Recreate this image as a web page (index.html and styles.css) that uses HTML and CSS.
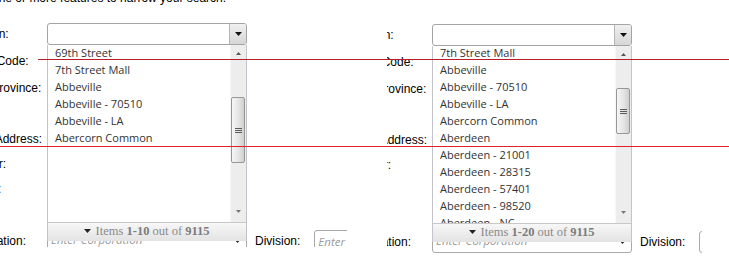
FILE: index.html
```html
<!DOCTYPE html>
<html lang="en">
  <head>
    <meta charset="UTF-8" />
    <meta name="viewport" content="width=device-width, initial-scale=1.0" />
    <title>search</title>
    <link rel="stylesheet" href="styles.css">
  </head>
  <body>
    <div class="page">
      <div class="shots">
        <!-- first capture: list scrolled, 10 items loaded -->
        <div class="shot shot-a">
          <div class="search">
            <p class="intro">Enter one or more features to narrow your search.</p>
            <div class="fields">
              <label>Location:</label>
              <div class="combo">
                <input class="combo-input" type="text" />
                <span class="combo-btn">
                  <svg width="7" height="4" viewBox="0 0 7 4"><polygon points="0,0 7,0 3.5,4" fill="#111" /></svg>
                </span>
                <div class="popup">
                  <div class="popup-body">
                    <ul class="popup-items" style="margin-top: -1px">
                      <li>69th Street</li>
                      <li>7th Street Mall</li>
                      <li>Abbeville</li>
                      <li>Abbeville - 70510</li>
                      <li>Abbeville - LA</li>
                      <li>Abercorn Common</li>
                    </ul>
                    <div class="scroll">
                      <span class="scroll-btn">
                        <svg width="5" height="3" viewBox="0 0 5 3"><polygon points="0,3 5,3 2.5,0" fill="#555" /></svg>
                      </span>
                      <div class="scroll-track">
                        <div class="thumb" style="margin-top: 35px; height: 66px"><i class="grip"></i></div>
                      </div>
                      <span class="scroll-btn scroll-btn-down">
                        <svg width="5" height="3" viewBox="0 0 5 3"><polygon points="0,0 5,0 2.5,3" fill="#777" /></svg>
                      </span>
                    </div>
                  </div>
                  <div class="popup-foot">
                    <svg width="7" height="4" viewBox="0 0 7 4"><polygon points="0,0 7,0 3.5,4" fill="#222" /></svg>
                    Items <b>1-10</b> out of <b>9115</b>
                  </div>
                </div>
              </div>
              <label>Postal Code:</label>
              <input class="input" type="text" />
              <label>State/Province:</label>
              <input class="input" type="text" />
              <label>City:</label>
              <input class="input" type="text" />
              <label>Street Address:</label>
              <input class="input" type="text" />
              <label>Number:</label>
              <input class="input" type="text" />
              <label>County:</label>
              <input class="input" type="text" />
              <label>Site:</label>
              <input class="input" type="text" />
              <label>Corporation:</label>
              <div class="split">
                <div class="combo combo-plain">
                  <input class="combo-input" type="text" placeholder="Enter Corporation" />
                  <svg class="caret" width="7" height="4" viewBox="0 0 7 4"><polygon points="0,0 7,0 3.5,4" fill="#222" /></svg>
                </div>
                <label class="split-label">Division:</label>
                <input class="input input-short" type="text" placeholder="Enter Division" />
              </div>
            </div>
          </div>
        </div>

        <!-- second capture: 20 items loaded -->
        <div class="shot shot-b">
          <div class="search search-b">
            <div class="fields">
              <label>Location:</label>
              <div class="combo">
                <input class="combo-input" type="text" />
                <span class="combo-btn">
                  <svg width="7" height="4" viewBox="0 0 7 4"><polygon points="0,0 7,0 3.5,4" fill="#111" /></svg>
                </span>
                <div class="popup">
                  <div class="popup-body">
                    <ul class="popup-items" style="margin-top: -2px">
                      <li>7th Street Mall</li>
                      <li>Abbeville</li>
                      <li>Abbeville - 70510</li>
                      <li>Abbeville - LA</li>
                      <li>Abercorn Common</li>
                      <li>Aberdeen</li>
                      <li>Aberdeen - 21001</li>
                      <li>Aberdeen - 28315</li>
                      <li>Aberdeen - 57401</li>
                      <li>Aberdeen - 98520</li>
                      <li>Aberdeen - NC</li>
                    </ul>
                    <div class="scroll">
                      <span class="scroll-btn">
                        <svg width="5" height="3" viewBox="0 0 5 3"><polygon points="0,3 5,3 2.5,0" fill="#555" /></svg>
                      </span>
                      <div class="scroll-track">
                        <div class="thumb" style="margin-top: 25px; height: 46px"><i class="grip"></i></div>
                      </div>
                      <span class="scroll-btn scroll-btn-down">
                        <svg width="5" height="3" viewBox="0 0 5 3"><polygon points="0,0 5,0 2.5,3" fill="#777" /></svg>
                      </span>
                    </div>
                  </div>
                  <div class="popup-foot">
                    <svg width="7" height="4" viewBox="0 0 7 4"><polygon points="0,0 7,0 3.5,4" fill="#222" /></svg>
                    Items <b>1-20</b> out of <b>9115</b>
                  </div>
                </div>
              </div>
              <label>Postal Code:</label>
              <input class="input" type="text" />
              <label>State/Province:</label>
              <input class="input" type="text" />
              <label>City:</label>
              <input class="input" type="text" />
              <label>Street Address:</label>
              <input class="input" type="text" />
              <label>Number:</label>
              <input class="input" type="text" />
              <label>County:</label>
              <input class="input" type="text" />
              <label>Site:</label>
              <input class="input" type="text" />
              <label>Corporation:</label>
              <div class="split">
                <div class="combo combo-plain">
                  <input class="combo-input" type="text" placeholder="Enter Corporation" />
                  <svg class="caret" width="7" height="4" viewBox="0 0 7 4"><polygon points="0,0 7,0 3.5,4" fill="#222" /></svg>
                </div>
                <label class="split-label">Division:</label>
                <input class="input input-short" type="text" placeholder="Enter Division" />
              </div>
            </div>
          </div>
        </div>
      </div>

      <div class="mark mark-top"></div>
      <div class="mark mark-mid"></div>
    </div>
  </body>
</html>
```

FILE: styles.css
```css
body {
  margin: 0;
  background: #fff;
  font-family: "Liberation Sans", Arial, sans-serif;
  font-size: 12px;
  color: #000;
}
.page {
  position: relative;
  width: 729px;
  height: 278px;
  overflow: hidden;
}
.shots {
  display: flex;
  gap: 40px;
}
.shot {
  flex: none;
  overflow: hidden;
}
.shot-a {
  width: 347px;
  height: 247px;
}
.shot-b {
  width: 315px;
  height: 255px;
}
.search {
  margin-left: -40px;
}
.search-b {
  margin-left: -42px;
  padding-top: 21px;
}
.intro {
  margin: -9px 0 0;
  line-height: 14px;
  white-space: nowrap;
}
.search .intro + .fields {
  margin-top: 15px;
}
.fields {
  display: grid;
  grid-template-columns: 87px auto;
  grid-template-rows: 27px 27px 27px 25px 25px 25px 26px 26px 26px;
  align-items: center;
  justify-items: start;
}
.fields label {
  white-space: nowrap;
  line-height: 14px;
}
.input {
  box-sizing: border-box;
  width: 200px;
  height: 22px;
  margin: 0;
  padding: 0 3px;
  border: 1px solid #a9a9a9;
  border-radius: 3px;
  font: italic 11.5px "Open Sans", sans-serif;
}
.input::placeholder,
.combo-input::placeholder {
  color: #9a9a9a;
  font-style: italic;
}
.input-short {
  width: 100px;
}

/* combo box */
.combo {
  position: relative;
  display: flex;
  box-sizing: border-box;
  width: 200px;
  height: 22px;
  border: 1px solid #a4a4a4;
  border-radius: 3px;
  align-self: start;
  margin-top: 3px;
}
.combo-input {
  flex: 1;
  min-width: 0;
  margin: 0;
  padding: 0 3px;
  border: none;
  background: transparent;
  font: italic 11.5px "Open Sans", sans-serif;
  outline: none;
}
.combo-btn {
  flex: none;
  box-sizing: border-box;
  width: 17px;
  display: flex;
  align-items: center;
  justify-content: center;
  border-left: 1px solid #b4b4b4;
  border-radius: 0 2px 2px 0;
  background: linear-gradient(#f0f0f0, #d6d6d6);
}
.combo-plain {
  align-self: center;
  margin-top: 0;
  align-items: center;
  border-color: #a9a9a9;
}
.combo-plain .combo-input {
  align-self: stretch;
  padding-bottom: 3px;
}
.combo-plain .caret {
  flex: none;
  margin-right: 5px;
}

/* dropdown list */
.popup {
  position: absolute;
  top: calc(100% + 1px);
  left: -1px;
  right: -1px;
  z-index: 5;
  background: #fff;
  border: 1px solid #c3c3cb;
  border-top: none;
  border-bottom: none;
}
.popup-body {
  display: flex;
  height: 177px;
  overflow: hidden;
}
.popup-items {
  flex: 1;
  margin: 0;
  padding: 0 0 0 7px;
  list-style: none;
}
.popup-items li {
  height: 17px;
  font: 11px/17px "Open Sans", sans-serif;
  color: #333;
  white-space: nowrap;
}
.scroll {
  flex: none;
  width: 16px;
  box-sizing: border-box;
  display: flex;
  flex-direction: column;
  background: #ededed;
  border-left: 1px solid #f7f7f7;
}
.scroll-btn {
  flex: none;
  height: 17px;
  display: flex;
  align-items: center;
  justify-content: center;
}
.scroll-btn-down {
  height: 13px;
  padding-bottom: 4px;
}
.scroll-track {
  flex: 1;
}
.thumb {
  box-sizing: border-box;
  width: 14px;
  display: flex;
  align-items: center;
  justify-content: center;
  border: 1px solid #979797;
  border-radius: 2px;
  background: linear-gradient(to right, #f6f6f6, #e2e2e2 60%, #cfcfcf);
}
.grip {
  display: block;
  width: 7px;
  height: 1px;
  background: #5a5a5a;
  box-shadow: 0 2px #5a5a5a, 0 -2px #5a5a5a;
}
.popup-foot {
  box-sizing: border-box;
  height: 19px;
  border-top: 1px solid #c8c8c8;
  background: linear-gradient(#f7f7f7, #e3e3e3);
  text-align: center;
  font: 12.5px/17px "Liberation Serif", "Times New Roman", serif;
  color: #8a8a8a;
  white-space: nowrap;
}
.popup-foot svg {
  vertical-align: 2px;
  margin-right: 1px;
}
.popup-foot b {
  color: #7c7c7c;
}

/* last row: corporation + division */
.split {
  display: flex;
  align-items: center;
}
.fields .split-label {
  margin: 0 14px 0 8px;
}

/* marker lines drawn over the captures */
.mark {
  position: absolute;
  height: 1px;
  z-index: 10;
}
.mark-top {
  left: 38px;
  right: 0;
  top: 59px;
  background: #b81d2c;
}
.mark-mid {
  left: 0;
  right: 0;
  top: 146px;
  background: #e0202c;
}
```
